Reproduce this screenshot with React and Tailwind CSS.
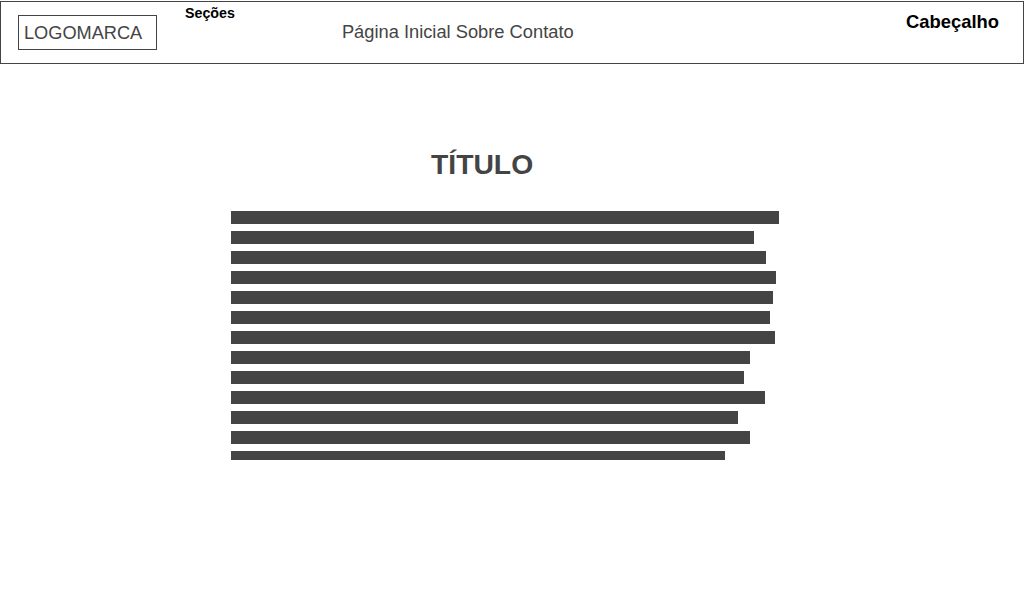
const bars = [548, 523, 535, 545, 542, 539, 544, 519, 513, 534, 507, 519];

export default function App() {
  return (
    <div className="min-h-[600px] bg-white font-['Liberation_Sans',Arial,sans-serif] pt-px">
      <header className="flex h-[63px] items-start border border-[#444444]">
        <div className="ml-[17px] mt-[13px] flex h-[35px] w-[139px] items-center border border-[#444444] pl-[5px] text-[18.2px] leading-5 text-[#444444]">
          LOGOMARCA
        </div>
        <div className="ml-[28px] mt-[3px] text-[14.25px] font-bold leading-4 text-black">Seções</div>
        <nav className="ml-[107px] mt-[20px] text-[18.3px] leading-5 text-[#444444]">
          Página Inicial Sobre Contato
        </nav>
        <div className="ml-auto mr-[24px] mt-[10px] text-[18.4px] font-bold leading-5 text-black">
          Cabeçalho
        </div>
      </header>

      <main className="flex flex-col">
        <h1 className="ml-[431px] mt-[84px] text-[28.3px] font-bold leading-8 text-[#444444]">TÍTULO</h1>
        <div className="ml-[231px] mt-[31px] flex flex-col gap-[7px]">
          {bars.map((w, i) => (
            <div key={i} className="h-[13px] bg-[#444444]" style={{ width: w }} />
          ))}
          <div className="h-[9px] w-[494px] bg-[#444444]" />
        </div>
      </main>
    </div>
  );
}
